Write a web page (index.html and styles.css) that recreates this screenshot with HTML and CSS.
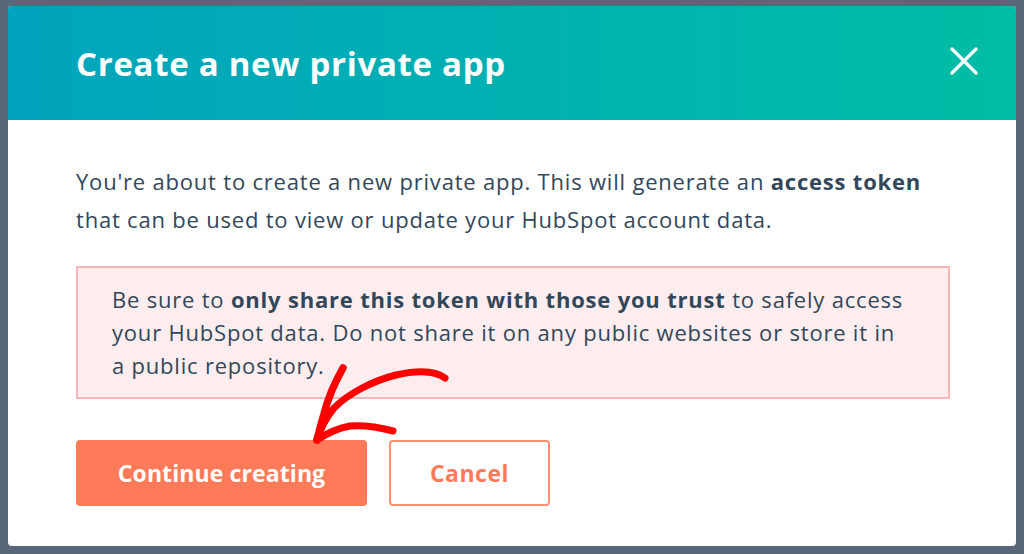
FILE: index.html
```
<!DOCTYPE html>
<html lang="en">
<head>
    <meta charset="UTF-8">
    <meta name="viewport" content="width=device-width, initial-scale=1.0">
    <title>Create a new private app</title>
    <link rel="stylesheet" href="styles.css">
</head>
<body>
    <div class="modal">
        <div class="modal-header">
            <h1>Create a new private app</h1>
            <button class="close" aria-label="Close">
                <svg width="28" height="28" viewBox="0 0 28 28">
                    <path d="M2 2 L26 26 M26 2 L2 26" stroke="#fff" stroke-width="3.2" stroke-linecap="round"/>
                </svg>
            </button>
        </div>
        <div class="modal-body">
            <p class="intro">You're about to create a new private app. This will generate an <b>access token</b><br>that can be used to view or update your HubSpot account data.</p>
            <div class="alert">
                Be sure to <b>only share this token with those you trust</b> to safely access<br>your HubSpot data. Do not share it on any public websites or store it in<br>a public repository.
            </div>
            <div class="actions">
                <button class="btn primary">Continue creating</button>
                <button class="btn secondary">Cancel</button>
            </div>
        </div>
        <!-- hand drawn arrow pointing at the button -->
        <svg class="arrow" viewBox="8 6 1008 540" width="1008" height="540">
            <g fill="none" stroke="#ff0000" stroke-linecap="round" stroke-linejoin="round">
                <path d="M445 378 C436 371 418 370 396 375 C372 381 348 394 334 408 C326 418 320 430 317 440" stroke-width="7"/>
                <path d="M343 368 C335 382 328 398 324 414 C321 424 319 432 317 440" stroke-width="7.5"/>
                <path d="M393 431 C378 427 362 425 350 426 C338 428 326 434 317 440" stroke-width="7"/>
            </g>
        </svg>
    </div>
</body>
</html>
```
FILE: styles.css
```
body {
    margin: 0;
    padding: 6px 8px;
    height: 554px;
    box-sizing: border-box;
    background-color: #5a6779;
    font-family: 'Open Sans', sans-serif;
    color: #33475b;
    overflow: hidden;
}
.modal {
    position: relative;
    width: 1008px;
    height: 540px;
    background: #fff;
    border-radius: 4px;
    overflow: hidden;
}
.modal-header {
    height: 114px;
    box-sizing: border-box;
    padding: 0 38px 0 68px;
    display: flex;
    align-items: center;
    justify-content: space-between;
    background: linear-gradient(to right, #00a4bd, #00bda5);
}
.modal-header h1 {
    margin: 0 0 0;
    color: #fff;
    font-size: 33px;
    font-weight: 700;
    letter-spacing: 0.7px;
}
.close {
    background: none;
    border: none;
    padding: 0;
    width: 28px;
    height: 28px;
    cursor: pointer;
    margin-bottom: 4px;
}
.modal-body {
    padding: 42px 66px 0 68px;
}
.intro {
    margin: 0;
    font-size: 22px;
    letter-spacing: 0.8px;
    line-height: 38px;
}
.intro b, .alert b {
    font-weight: 700;
}
.alert {
    margin-top: 28px;
    padding: 15px 20px 15px 34px;
    background-color: #fdedee;
    border: 2px solid #f8b6b9;
    font-size: 22px;
    letter-spacing: 0.8px;
    line-height: 33px;
}
.actions {
    display: flex;
    gap: 22px;
    margin-top: 41px;
}
.btn {
    height: 66px;
    font-family: 'Open Sans', sans-serif;
    font-size: 23px;
    font-weight: 700;
    letter-spacing: 0.5px;
    border-radius: 4px;
    cursor: pointer;
}
.primary {
    width: 291px;
    background-color: #ff7a59;
    border: none;
    color: #fff;
    letter-spacing: 0.1px;
}
.secondary {
    width: 161px;
    background-color: #fff;
    border: 2px solid #ff8f73;
    color: #ff7a59;
}
.arrow {
    position: absolute;
    left: 0;
    top: 0;
    pointer-events: none;
}
```
